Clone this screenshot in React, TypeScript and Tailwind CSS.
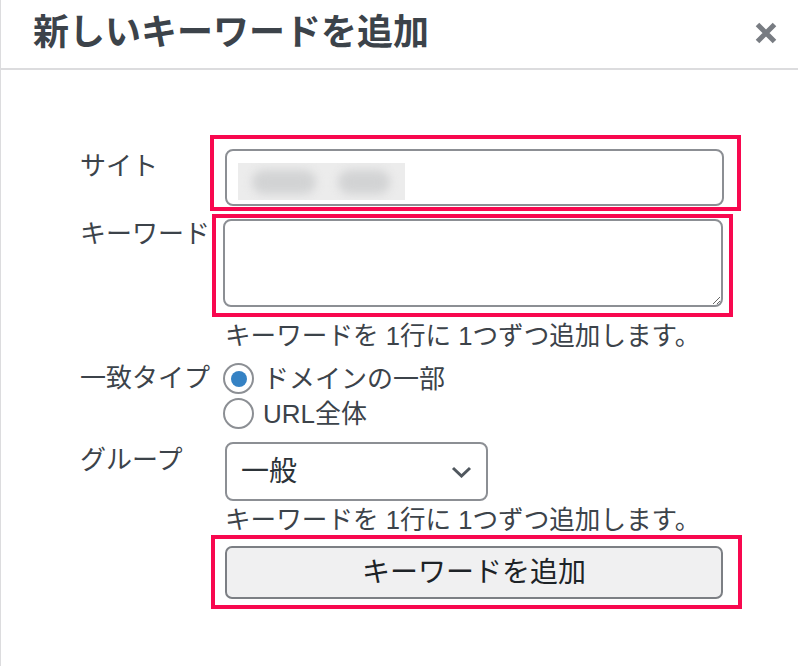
import React from "react";

export default function App() {
  return (
    <div className="w-[798px] h-[666px] bg-white overflow-hidden shadow-[inset_1px_0_0_#dcdcde] font-['Liberation_Sans','Noto_Sans_CJK_JP',sans-serif] text-[#3c434a]">
      <header className="h-[70px] flex items-center justify-between pl-[33px] pr-[21px] pb-[2px] border-b-2 border-[#dcdcde]">
        <h1 className="text-[36px] font-bold leading-none text-[#3c434a]">新しいキーワードを追加</h1>
        <svg width="22" height="22" viewBox="0 0 22 22" aria-hidden="true">
          <path d="M2.5 2.5 L19.5 19.5 M19.5 2.5 L2.5 19.5" stroke="#787c82" strokeWidth="5" />
        </svg>
      </header>

      <div className="pt-[65px] pl-[80px] text-[26px]">
        {/* Site */}
        <div className="flex">
          <div className="w-[130px] pt-[16px] leading-[30px]">サイト</div>
          <div className="w-[531px] border-4 border-[#f8084f] pl-[11px] pt-[10px] pr-[13px] pb-[1px]">
            <div className="h-[57px] border-2 border-[#8c8f94] rounded-[8px] pl-[11px] pt-[12px] bg-white">
              <div className="relative w-[167px] h-[37px] bg-[#ececec] overflow-hidden">
                <div className="absolute left-[14px] top-[7px] w-[64px] h-[24px] rounded-full bg-[#d2d3d4] blur-[5px]" />
                <div className="absolute left-[100px] top-[7px] w-[52px] h-[24px] rounded-full bg-[#d2d3d4] blur-[5px]" />
              </div>
            </div>
          </div>
        </div>

        {/* Keyword */}
        <div className="mt-[3px] flex">
          <div className="w-[130px] pt-[5px] leading-[30px]">キーワード</div>
          <div className="ml-[2px] w-[521px] border-4 border-[#f8084f] pl-[7px] pt-[1px] pr-[6px] pb-[6px]">
            <textarea className="block w-[500px] h-[88px] border-2 border-[#8c8f94] rounded-[8px] bg-white outline-none" />
          </div>
        </div>

        <div className="mt-[4px] pl-[145px] leading-[30px] text-[25.6px] whitespace-nowrap">キーワードを 1行に 1つずつ追加します。</div>

        {/* Match type */}
        <div className="mt-[10px] flex">
          <div className="w-[143px] leading-[35px]">一致タイプ</div>
          <div className="flex flex-col">
            <div className="h-[35px] flex items-center gap-[9px]">
              <span className="w-[31px] h-[31px] rounded-full border-2 border-[#8c8f94] bg-white flex items-center justify-center">
                <span className="w-[16px] h-[16px] rounded-full bg-[#3582c4]" />
              </span>
              <span className="leading-[30px]">ドメインの一部</span>
            </div>
            <div className="h-[35px] flex items-center gap-[9px]">
              <span className="w-[31px] h-[31px] rounded-full border-2 border-[#8c8f94] bg-white" />
              <span className="leading-[30px]">URL全体</span>
            </div>
          </div>
        </div>

        {/* Group */}
        <div className="mt-[11px] flex">
          <div className="w-[145px] pt-[3px] leading-[30px]">グループ</div>
          <div className="w-[263px] h-[59px] border-2 border-[#8c8f94] rounded-[8px] flex items-center justify-between pl-[14px] pr-[14px] text-[#2c3338]">
            <span className="leading-[30px] text-[28px]">一般</span>
            <svg width="21" height="12" viewBox="0 0 21 12" aria-hidden="true">
              <path d="M2 2 L10.5 10 L19 2" fill="none" stroke="#50575e" strokeWidth="3" />
            </svg>
          </div>
        </div>

        <div className="mt-[4px] pl-[145px] leading-[30px] text-[25.6px] whitespace-nowrap">キーワードを 1行に 1つずつ追加します。</div>

        {/* Submit */}
        <div className="ml-[131px] w-[531px] border-4 border-[#f8084f] pl-[10px] pt-[7px] pr-[15px] pb-[6px]">
          <button className="w-full h-[53px] bg-[#f0f0f1] border-2 border-[#7c7f84] rounded-[7px] text-[28px] text-[#1d2327] leading-none">
            キーワードを追加
          </button>
        </div>
      </div>
    </div>
  );
}
